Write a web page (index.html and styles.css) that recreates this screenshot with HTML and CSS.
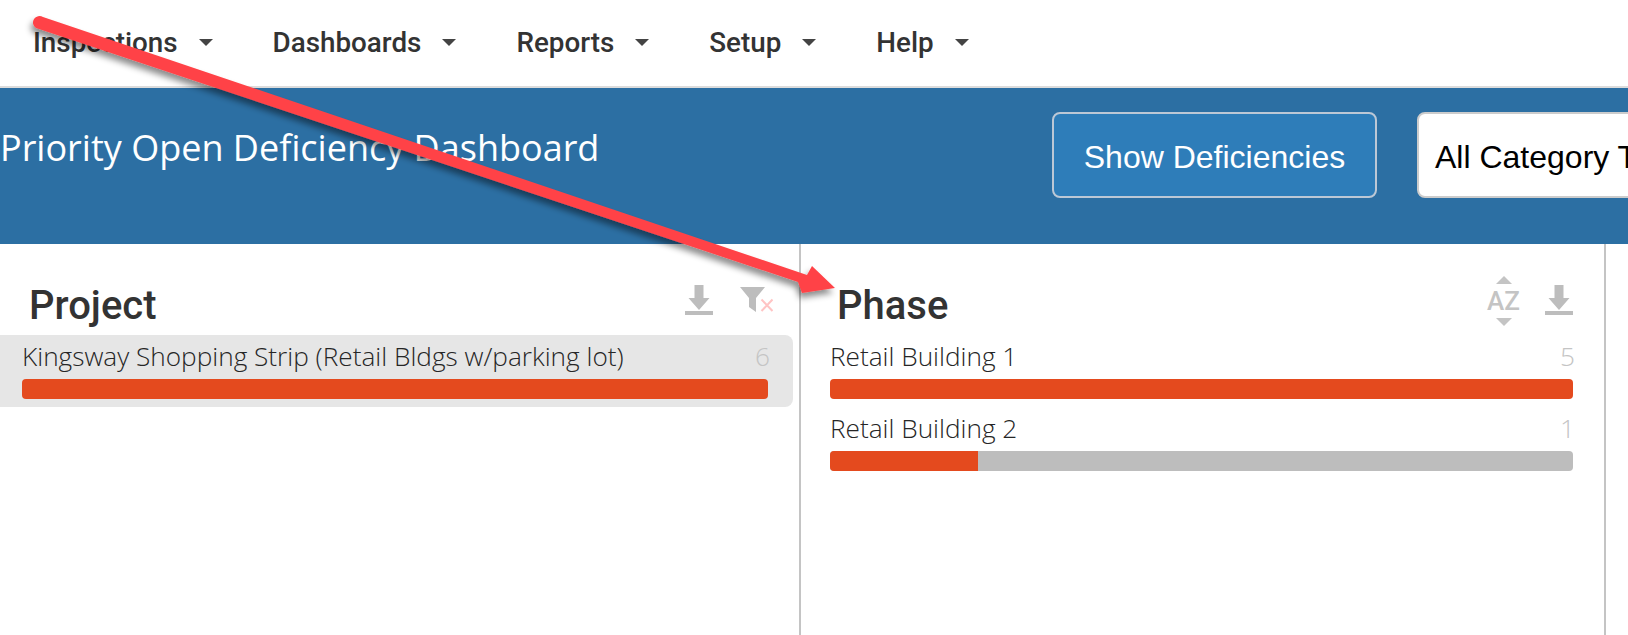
FILE: index.html
```html
<!DOCTYPE html>
<html lang="en">
<head>
<meta charset="utf-8">
<title>Priority Open Deficiency Dashboard</title>
<link rel="stylesheet" href="styles.css">
</head>
<body>
<div class="page">
  <nav class="nav">
    <a class="nav-item">Inspections<span class="caret"></span></a>
    <a class="nav-item">Dashboards<span class="caret"></span></a>
    <a class="nav-item">Reports<span class="caret"></span></a>
    <a class="nav-item">Setup<span class="caret"></span></a>
    <a class="nav-item">Help<span class="caret"></span></a>
  </nav>
  <header class="banner">
    <h1 class="title">Priority Open Deficiency Dashboard</h1>
    <button class="show-btn">Show Deficiencies</button>
    <div class="category">All Category Types</div>
  </header>
  <main class="columns">
    <section class="col col-project">
      <div class="col-head">
        <h2 class="col-title">Project</h2>
        <div class="tools">
          <svg class="ico-dl" width="28" height="30" viewBox="0 0 28 30"><path d="M9.500 0h9v13h6L14 25 3.500 13h6z M0 26h28v4H0z" fill="#bdbdbd"/></svg>
          <svg class="ico-filter" width="33" height="25" viewBox="0 0 33 25"><path d="M0 0h25L16 11v14l-7-5V11z" fill="#bdbdbd"/><path d="M21.500 12.500l11 11.500M32.500 12.500L21.500 24" stroke="#ffc4c4" stroke-width="2" fill="none"/></svg>
        </div>
      </div>
      <div class="row row-selected">
        <div class="row-text"><span class="row-label">Kingsway Shopping Strip (Retail Bldgs w/parking lot)</span><span class="row-count">6</span></div>
        <div class="bar"><div class="bar-fill" style="width:100%"></div></div>
      </div>
    </section>
    <section class="col col-phase">
      <div class="col-head">
        <h2 class="col-title">Phase</h2>
        <div class="tools">
          <div class="az">
            <span class="tri-up"></span>
            <span class="az-text">AZ</span>
            <span class="tri-down"></span>
          </div>
          <svg class="ico-dl" width="28" height="30" viewBox="0 0 28 30"><path d="M9.500 0h9v13h6L14 25 3.500 13h6z M0 26h28v4H0z" fill="#bdbdbd"/></svg>
        </div>
      </div>
      <div class="row">
        <div class="row-text"><span class="row-label">Retail Building 1</span><span class="row-count">5</span></div>
        <div class="bar"><div class="bar-fill" style="width:100%"></div></div>
      </div>
      <div class="row">
        <div class="row-text"><span class="row-label">Retail Building 2</span><span class="row-count">1</span></div>
        <div class="bar"><div class="bar-fill" style="width:19.9%"></div></div>
      </div>
    </section>
  </main>
  <svg class="arrow" width="1628" height="635" viewBox="0 0 1628 635">
    <defs>
      <filter id="shadow" x="-5%" y="-20%" width="110%" height="140%">
        <feDropShadow dx="-2" dy="5" stdDeviation="3" flood-color="#000" flood-opacity="0.45"/>
      </filter>
    </defs>
    <g filter="url(#shadow)">
      <path d="M43 17 L807 275 L812 266 L835 288 L802 293 L798 282 L36 28 A6 6 0 0 1 43 17 Z" fill="#ff4347"/>
    </g>
  </svg>
</div>
</body>
</html>
```

FILE: styles.css
```css
html, body {
  margin: 0;
  padding: 0;
  background: #fff;
}
.page {
  position: relative;
  width: 1628px;
  height: 635px;
  overflow: hidden;
  display: flex;
  flex-direction: column;
}
.nav {
  height: 86px;
  flex: none;
  display: flex;
  align-items: center;
  padding-left: 33px;
  gap: 60px;
  border-bottom: 2px solid #dcdcdc;
  font: 500 27.8px/1 Roboto, sans-serif;
  color: #333;
}
.nav-item {
  display: flex;
  align-items: center;
  gap: 21px;
}
.caret {
  width: 0;
  height: 0;
  border-left: 7px solid transparent;
  border-right: 7px solid transparent;
  border-top: 7px solid #444;
}
.banner {
  height: 156px;
  flex: none;
  box-sizing: border-box;
  background: #2c6fa3;
  display: flex;
  align-items: flex-start;
  padding: 24px 0 0 0;
  overflow: hidden;
}
.title {
  margin: 0;
  width: 1052px;
  flex: none;
  font: 400 36px/1 "Open Sans", sans-serif;
  color: #fff;
  padding-top: 18px;
}
.show-btn {
  flex: none;
  width: 325px;
  height: 86px;
  box-sizing: border-box;
  background: #2e7db9;
  border: 2px solid #bcc8d6;
  border-radius: 8px;
  color: #fff;
  font: 400 32px/1 "Liberation Sans", sans-serif;
  padding: 4px 0 0;
}
.category {
  flex: none;
  width: 400px;
  height: 86px;
  box-sizing: border-box;
  margin-left: 40px;
  background: #fff;
  border: 2px solid #ccc;
  border-radius: 8px;
  color: #000;
  font: 400 32px/86px "Liberation Sans", sans-serif;
  padding-left: 16px;
  white-space: nowrap;
}
.columns {
  flex: 1;
  display: flex;
}
.col {
  box-sizing: border-box;
  flex: none;
  border-right: 2px solid #c4c4c4;
}
.col-project {
  width: 801px;
  padding-right: 6px;
}
.col-phase {
  width: 805px;
  padding: 0 31px 0 29px;
}
.col-head {
  height: 91px;
  display: flex;
  justify-content: space-between;
  padding-top: 34px;
  box-sizing: border-box;
}
.col-title {
  margin: 0;
  font: 500 40px/56px Roboto, sans-serif;
  color: #333;
}
.col-project .col-title {
  padding-left: 29px;
}
.col-phase .col-title {
  padding-left: 7px;
}
.tools {
  display: flex;
  align-items: flex-start;
  gap: 25px;
  margin-top: -2px;
}
.col-project .tools {
  padding-right: 20px;
  gap: 27px;
  padding-top: 9px;
}
.col-project .ico-filter {
  margin-top: 2px;
}
.col-phase .ico-dl {
  margin-top: 9px;
}
.az {
  width: 33px;
  height: 50px;
  display: flex;
  flex-direction: column;
  align-items: center;
  justify-content: space-between;
}
.az-text {
  font: 500 26px/1 Roboto, sans-serif;
  color: #c4c4c4;
}
.tri-up, .tri-down {
  width: 0;
  height: 0;
  border-left: 8px solid transparent;
  border-right: 8px solid transparent;
}
.tri-up { border-bottom: 8px solid #c4c4c4; }
.tri-down { border-top: 8px solid #c4c4c4; }
.row {
  height: 72px;
  box-sizing: border-box;
}
.row-selected {
  background: #e6e6e6;
  border-radius: 0 8px 8px 0;
  padding: 0 25px 0 22px;
}
.row-text {
  height: 44px;
  box-sizing: border-box;
  padding-bottom: 2px;
  display: flex;
  justify-content: space-between;
  align-items: center;
  font: 300 26.2px/42px "Open Sans", sans-serif;
  color: #262626;
}
.row-count {
  color: #c4c4c4;
  margin-right: -2px;
}
.bar {
  height: 20px;
  background: #bdbdbd;
  border-radius: 4px;
  overflow: hidden;
}
.bar-fill {
  height: 100%;
  background: #e44a1e;
}
.arrow {
  position: absolute;
  left: 0;
  top: 0;
  pointer-events: none;
}
```
